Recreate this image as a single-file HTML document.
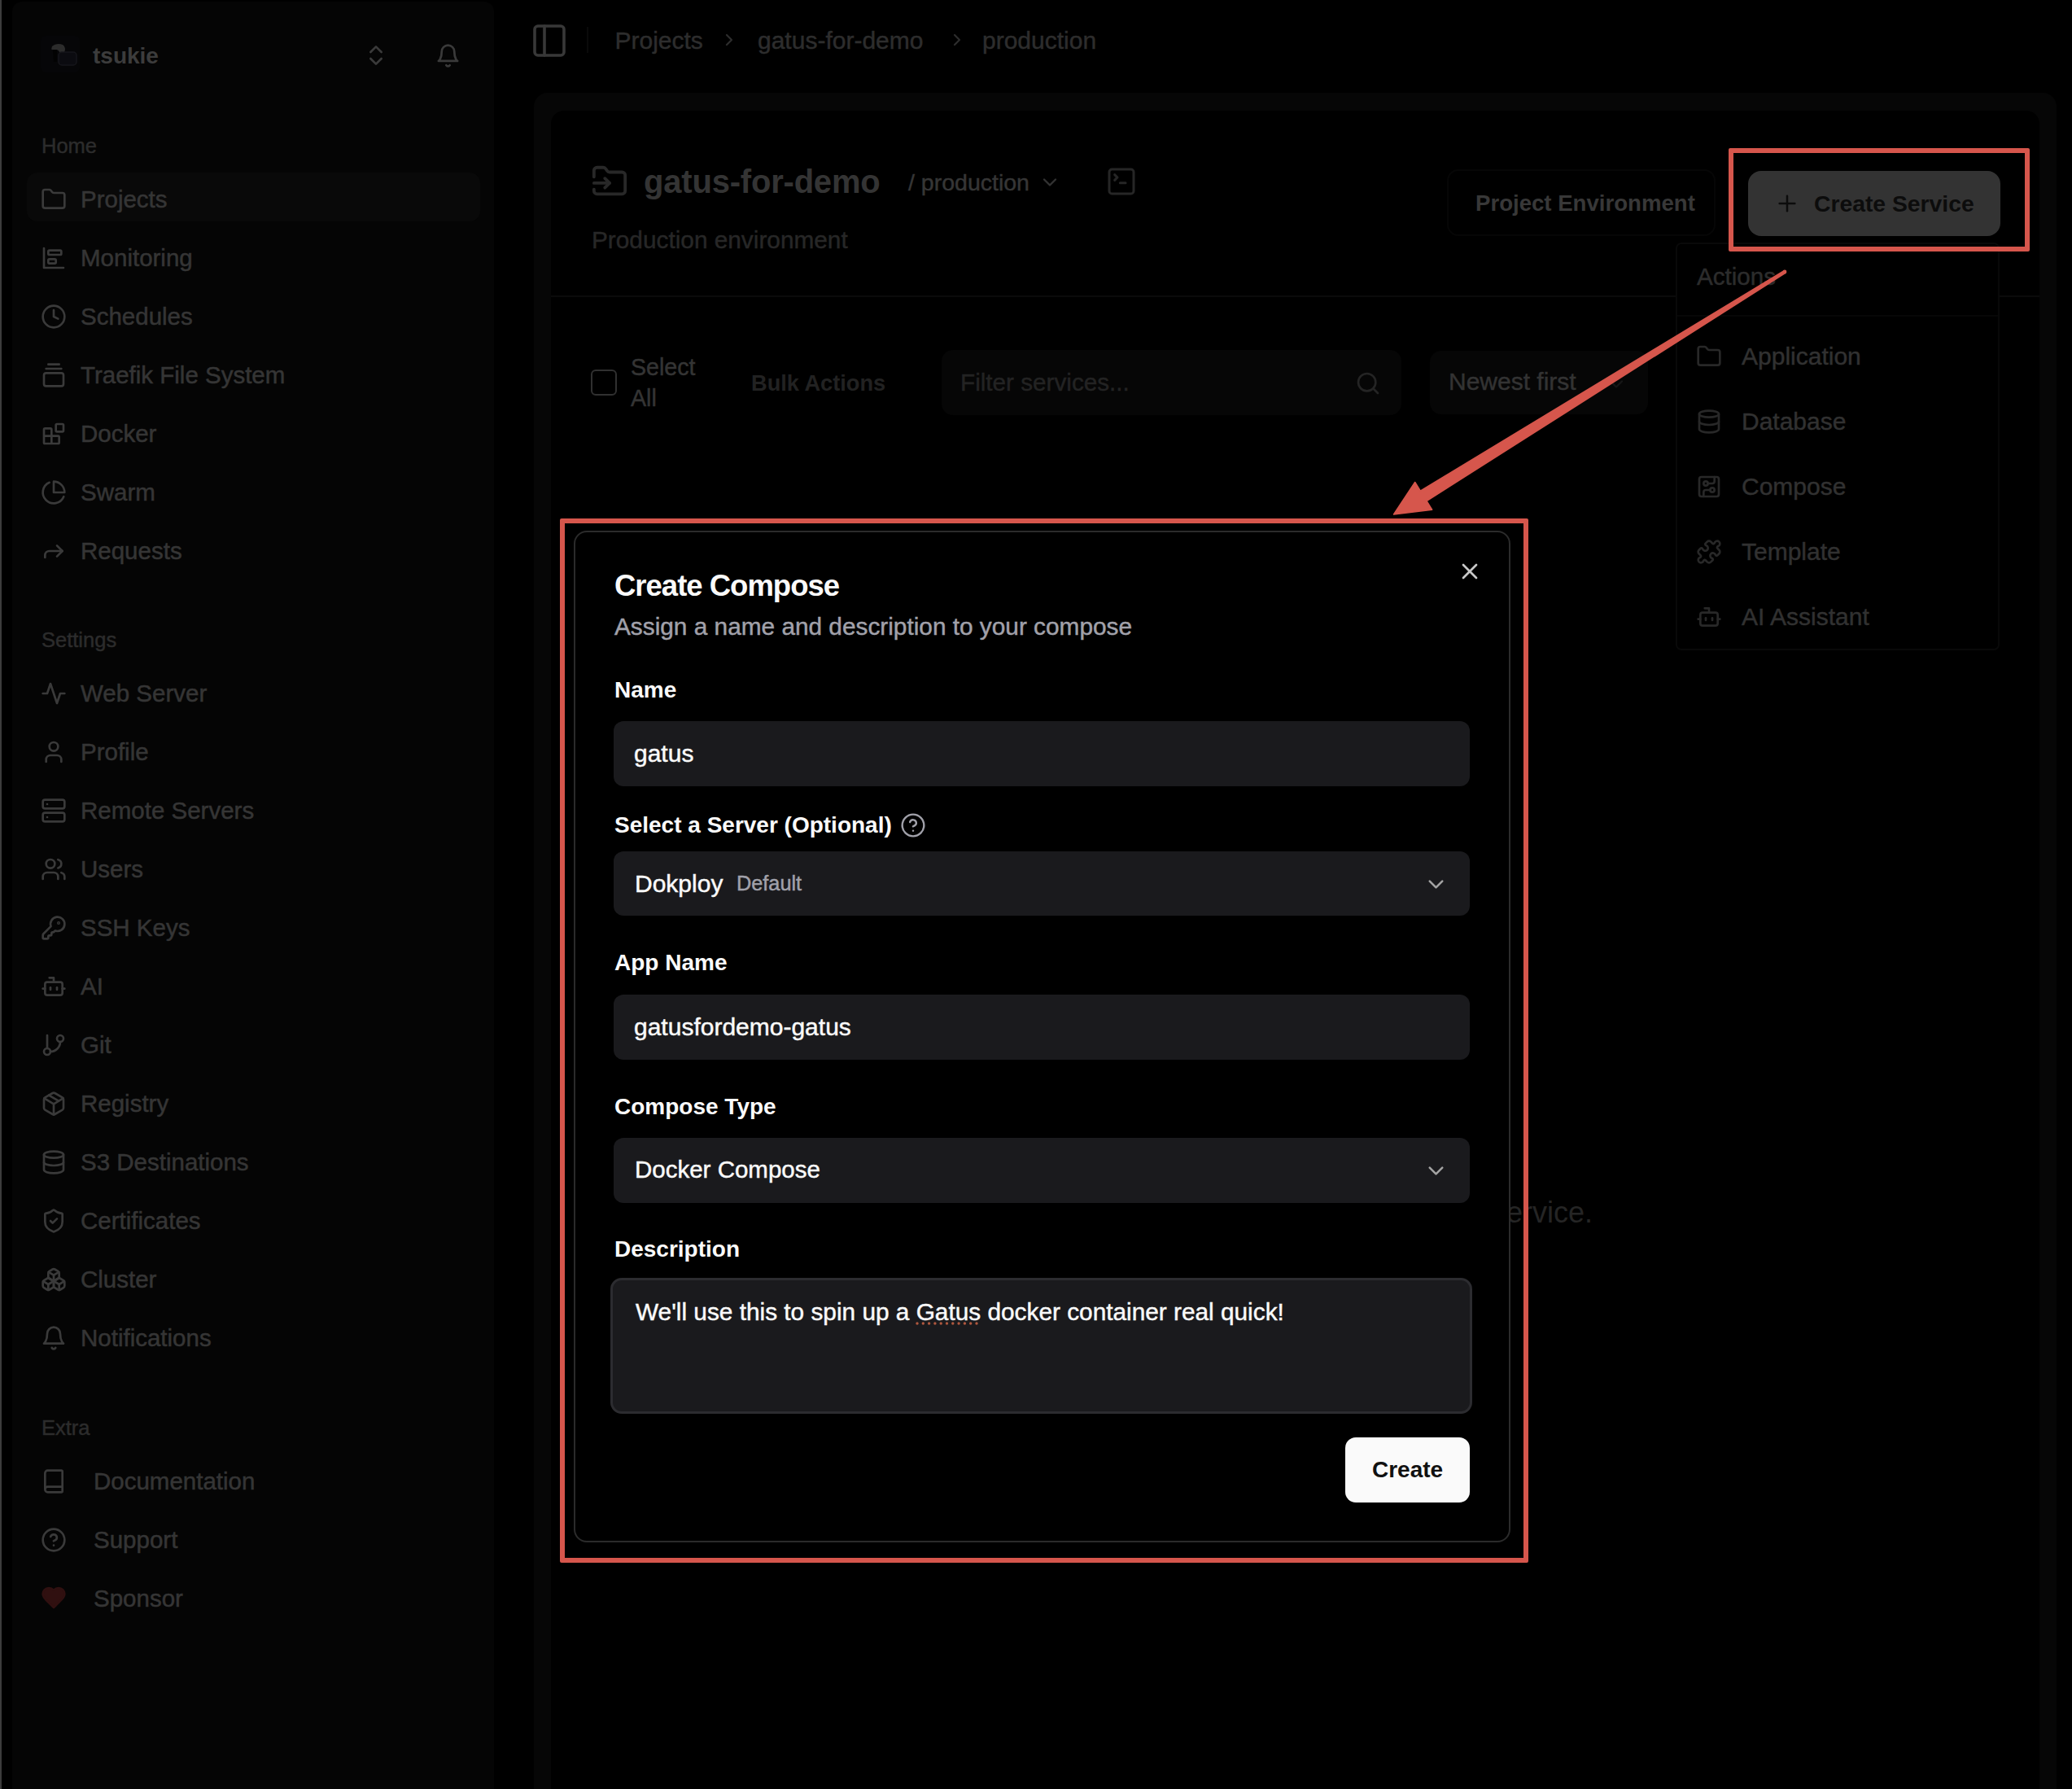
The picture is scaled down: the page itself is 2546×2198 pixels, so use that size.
<!DOCTYPE html>
<html><head><meta charset="utf-8"><style>
html,body{margin:0;padding:0;background:#000;width:2546px;height:2198px;overflow:hidden;position:relative;font-family:"Liberation Sans",sans-serif}
.t{position:absolute;white-space:nowrap;line-height:1;-webkit-font-smoothing:antialiased}
.r{position:absolute}
.i{position:absolute;overflow:visible}
</style></head><body>
<div id="root" style="position:relative;width:2546px;height:2198px;overflow:hidden">
<div class="r" style="left:0;top:0;width:2px;height:2198px;background:#3c3c3c"></div>
<div class="r" style="left:15px;top:2px;width:592px;height:2196px;background:#050505;border-radius:12px 12px 0 0;"></div>
<div class="r" style="left:50px;top:44px;width:48px;height:45px;background:#060608;border-radius:6px;"></div>
<svg class="i" style="left:0;top:0" width="120" height="100"><path d="M64 57c3-3 9-4 13-2 3 2 4 6 2 9-1 2-3 3-5 3l-1-3c-1-2-2-3-4-3h-5c-1 0-1-1 0-4z" fill="#2c2c2c"/><path d="M65 61h5v15h-4z" fill="#020202"/><rect x="72" y="64" width="22" height="16" rx="4" fill="#0b0b10" stroke="#16161b" stroke-width="1.5"/></svg>
<div class="t" style="left:114.0px;top:54.8px;font-size:28px;color:#3c3c3c;font-weight:700;letter-spacing:0px;">tsukie</div>
<svg class="i" style="left:446.0px;top:52.0px;" width="32" height="32" viewBox="0 0 24 24" fill="none" stroke="#3a3a3a" stroke-width="2" stroke-linecap="round" stroke-linejoin="round"><path d="m7 15 5 5 5-5"/><path d="m7 9 5-5 5 5"/></svg>
<svg class="i" style="left:534.5px;top:52.5px;" width="31" height="31" viewBox="0 0 24 24" fill="none" stroke="#3a3a3a" stroke-width="2.1" stroke-linecap="round" stroke-linejoin="round"><path d="M6 8a6 6 0 0 1 12 0c0 7 3 9 3 9H3s3-2 3-9"/><path d="M10.3 21a1.94 1.94 0 0 0 3.4 0"/></svg>
<div class="t" style="left:51.0px;top:166.9px;font-size:25.5px;color:#2c2c2c;font-weight:400;letter-spacing:0px;-webkit-text-stroke:0.45px #2c2c2c;">Home</div>
<div class="r" style="left:33px;top:212px;width:557px;height:60px;background:#090909;border-radius:13px;"></div>
<svg class="i" style="left:50.0px;top:229.0px;" width="32" height="32" viewBox="0 0 24 24" fill="none" stroke="#3a3a3a" stroke-width="2" stroke-linecap="round" stroke-linejoin="round"><path d="M20 20a2 2 0 0 0 2-2V8a2 2 0 0 0-2-2h-7.9a2 2 0 0 1-1.69-.9L9.6 3.9A2 2 0 0 0 7.93 3H4a2 2 0 0 0-2 2v13a2 2 0 0 0 2 2Z"/></svg>
<div class="t" style="left:99.0px;top:229.8px;font-size:29.5px;color:#353535;font-weight:400;letter-spacing:0px;-webkit-text-stroke:0.5px #353535">Projects</div>
<svg class="i" style="left:50.0px;top:301.0px;" width="32" height="32" viewBox="0 0 24 24" fill="none" stroke="#3a3a3a" stroke-width="2" stroke-linecap="round" stroke-linejoin="round"><path d="M3 3v18h18"/><rect width="12" height="4" x="7" y="5" rx="1"/><rect width="7" height="4" x="7" y="13" rx="1"/></svg>
<div class="t" style="left:99.0px;top:301.8px;font-size:29.5px;color:#353535;font-weight:400;letter-spacing:0px;-webkit-text-stroke:0.5px #353535">Monitoring</div>
<svg class="i" style="left:50.0px;top:373.0px;" width="32" height="32" viewBox="0 0 24 24" fill="none" stroke="#3a3a3a" stroke-width="2" stroke-linecap="round" stroke-linejoin="round"><circle cx="12" cy="12" r="10"/><polyline points="12 6 12 12 16 14"/></svg>
<div class="t" style="left:99.0px;top:373.8px;font-size:29.5px;color:#353535;font-weight:400;letter-spacing:0px;-webkit-text-stroke:0.5px #353535">Schedules</div>
<svg class="i" style="left:50.0px;top:445.0px;" width="32" height="32" viewBox="0 0 24 24" fill="none" stroke="#3a3a3a" stroke-width="2" stroke-linecap="round" stroke-linejoin="round"><path d="M7 2h10"/><path d="M5 6h14"/><rect width="18" height="12" x="3" y="10" rx="2"/></svg>
<div class="t" style="left:99.0px;top:445.8px;font-size:29.5px;color:#353535;font-weight:400;letter-spacing:0px;-webkit-text-stroke:0.5px #353535">Traefik File System</div>
<svg class="i" style="left:50.0px;top:517.0px;" width="32" height="32" viewBox="0 0 24 24" fill="none" stroke="#3a3a3a" stroke-width="2" stroke-linecap="round" stroke-linejoin="round"><rect width="7" height="7" x="14" y="3" rx="1"/><path d="M10 21V8a1 1 0 0 0-1-1H4a1 1 0 0 0-1 1v12a1 1 0 0 0 1 1h12a1 1 0 0 0 1-1v-5a1 1 0 0 0-1-1H3"/></svg>
<div class="t" style="left:99.0px;top:517.8px;font-size:29.5px;color:#353535;font-weight:400;letter-spacing:0px;-webkit-text-stroke:0.5px #353535">Docker</div>
<svg class="i" style="left:50.0px;top:589.0px;" width="32" height="32" viewBox="0 0 24 24" fill="none" stroke="#3a3a3a" stroke-width="2" stroke-linecap="round" stroke-linejoin="round"><path d="M21.21 15.89A10 10 0 1 1 8 2.83"/><path d="M22 12A10 10 0 0 0 12 2v10z"/></svg>
<div class="t" style="left:99.0px;top:589.8px;font-size:29.5px;color:#353535;font-weight:400;letter-spacing:0px;-webkit-text-stroke:0.5px #353535">Swarm</div>
<svg class="i" style="left:50.0px;top:661.0px;" width="32" height="32" viewBox="0 0 24 24" fill="none" stroke="#3a3a3a" stroke-width="2" stroke-linecap="round" stroke-linejoin="round"><polyline points="15 17 20 12 15 7"/><path d="M4 18v-2a4 4 0 0 1 4-4h12"/></svg>
<div class="t" style="left:99.0px;top:661.8px;font-size:29.5px;color:#353535;font-weight:400;letter-spacing:0px;-webkit-text-stroke:0.5px #353535">Requests</div>
<div class="t" style="left:51.0px;top:774.4px;font-size:25.5px;color:#2c2c2c;font-weight:400;letter-spacing:0px;-webkit-text-stroke:0.45px #2c2c2c;">Settings</div>
<svg class="i" style="left:50.0px;top:836.0px;" width="32" height="32" viewBox="0 0 24 24" fill="none" stroke="#3a3a3a" stroke-width="2" stroke-linecap="round" stroke-linejoin="round"><path d="M22 12h-4l-3 9L9 3l-3 9H2"/></svg>
<div class="t" style="left:99.0px;top:836.8px;font-size:29.5px;color:#353535;font-weight:400;letter-spacing:0px;-webkit-text-stroke:0.5px #353535">Web Server</div>
<svg class="i" style="left:50.0px;top:908.0px;" width="32" height="32" viewBox="0 0 24 24" fill="none" stroke="#3a3a3a" stroke-width="2" stroke-linecap="round" stroke-linejoin="round"><path d="M19 21v-2a4 4 0 0 0-4-4H9a4 4 0 0 0-4 4v2"/><circle cx="12" cy="7" r="4"/></svg>
<div class="t" style="left:99.0px;top:908.8px;font-size:29.5px;color:#353535;font-weight:400;letter-spacing:0px;-webkit-text-stroke:0.5px #353535">Profile</div>
<svg class="i" style="left:50.0px;top:980.0px;" width="32" height="32" viewBox="0 0 24 24" fill="none" stroke="#3a3a3a" stroke-width="2" stroke-linecap="round" stroke-linejoin="round"><rect width="20" height="8" x="2" y="2" rx="2" ry="2"/><rect width="20" height="8" x="2" y="14" rx="2" ry="2"/><line x1="6" x2="6.01" y1="6" y2="6"/><line x1="6" x2="6.01" y1="18" y2="18"/></svg>
<div class="t" style="left:99.0px;top:980.8px;font-size:29.5px;color:#353535;font-weight:400;letter-spacing:0px;-webkit-text-stroke:0.5px #353535">Remote Servers</div>
<svg class="i" style="left:50.0px;top:1052.0px;" width="32" height="32" viewBox="0 0 24 24" fill="none" stroke="#3a3a3a" stroke-width="2" stroke-linecap="round" stroke-linejoin="round"><path d="M16 21v-2a4 4 0 0 0-4-4H6a4 4 0 0 0-4 4v2"/><circle cx="9" cy="7" r="4"/><path d="M22 21v-2a4 4 0 0 0-3-3.87"/><path d="M16 3.13a4 4 0 0 1 0 7.75"/></svg>
<div class="t" style="left:99.0px;top:1052.8px;font-size:29.5px;color:#353535;font-weight:400;letter-spacing:0px;-webkit-text-stroke:0.5px #353535">Users</div>
<svg class="i" style="left:50.0px;top:1124.0px;" width="32" height="32" viewBox="0 0 24 24" fill="none" stroke="#3a3a3a" stroke-width="2" stroke-linecap="round" stroke-linejoin="round"><path d="M2.586 17.414A2 2 0 0 0 2 18.828V21a1 1 0 0 0 1 1h3a1 1 0 0 0 1-1v-1a1 1 0 0 1 1-1h1a1 1 0 0 0 1-1v-1a1 1 0 0 1 1-1h.172a2 2 0 0 0 1.414-.586l.814-.814a6.5 6.5 0 1 0-4-4z"/><circle cx="16.5" cy="7.5" r=".5" fill="currentColor"/></svg>
<div class="t" style="left:99.0px;top:1124.8px;font-size:29.5px;color:#353535;font-weight:400;letter-spacing:0px;-webkit-text-stroke:0.5px #353535">SSH Keys</div>
<svg class="i" style="left:50.0px;top:1196.0px;" width="32" height="32" viewBox="0 0 24 24" fill="none" stroke="#3a3a3a" stroke-width="2" stroke-linecap="round" stroke-linejoin="round"><path d="M12 8V4H8"/><rect width="16" height="12" x="4" y="8" rx="2"/><path d="M2 14h2"/><path d="M20 14h2"/><path d="M15 13v2"/><path d="M9 13v2"/></svg>
<div class="t" style="left:99.0px;top:1196.8px;font-size:29.5px;color:#353535;font-weight:400;letter-spacing:0px;-webkit-text-stroke:0.5px #353535">AI</div>
<svg class="i" style="left:50.0px;top:1268.0px;" width="32" height="32" viewBox="0 0 24 24" fill="none" stroke="#3a3a3a" stroke-width="2" stroke-linecap="round" stroke-linejoin="round"><line x1="6" x2="6" y1="3" y2="15"/><circle cx="18" cy="6" r="3"/><circle cx="6" cy="18" r="3"/><path d="M18 9a9 9 0 0 1-9 9"/></svg>
<div class="t" style="left:99.0px;top:1268.8px;font-size:29.5px;color:#353535;font-weight:400;letter-spacing:0px;-webkit-text-stroke:0.5px #353535">Git</div>
<svg class="i" style="left:50.0px;top:1340.0px;" width="32" height="32" viewBox="0 0 24 24" fill="none" stroke="#3a3a3a" stroke-width="2" stroke-linecap="round" stroke-linejoin="round"><path d="M11 21.73a2 2 0 0 0 2 0l7-4A2 2 0 0 0 21 16V8a2 2 0 0 0-1-1.73l-7-4a2 2 0 0 0-2 0l-7 4A2 2 0 0 0 3 8v8a2 2 0 0 0 1 1.73z"/><path d="M12 22V12"/><path d="m3.3 7 7.703 4.734a2 2 0 0 0 1.994 0L20.7 7"/><path d="m7.5 4.27 9 5.15"/></svg>
<div class="t" style="left:99.0px;top:1340.8px;font-size:29.5px;color:#353535;font-weight:400;letter-spacing:0px;-webkit-text-stroke:0.5px #353535">Registry</div>
<svg class="i" style="left:50.0px;top:1412.0px;" width="32" height="32" viewBox="0 0 24 24" fill="none" stroke="#3a3a3a" stroke-width="2" stroke-linecap="round" stroke-linejoin="round"><ellipse cx="12" cy="5" rx="9" ry="3"/><path d="M3 5V19A9 3 0 0 0 21 19V5"/><path d="M3 12A9 3 0 0 0 21 12"/></svg>
<div class="t" style="left:99.0px;top:1412.8px;font-size:29.5px;color:#353535;font-weight:400;letter-spacing:0px;-webkit-text-stroke:0.5px #353535">S3 Destinations</div>
<svg class="i" style="left:50.0px;top:1484.0px;" width="32" height="32" viewBox="0 0 24 24" fill="none" stroke="#3a3a3a" stroke-width="2" stroke-linecap="round" stroke-linejoin="round"><path d="M20 13c0 5-3.5 7.5-7.66 8.95a1 1 0 0 1-.67-.01C7.5 20.5 4 18 4 13V6a1 1 0 0 1 1-1c2 0 4.5-1.2 6.24-2.72a1.17 1.17 0 0 1 1.52 0C14.51 3.81 17 5 19 5a1 1 0 0 1 1 1z"/><path d="m9 12 2 2 4-4"/></svg>
<div class="t" style="left:99.0px;top:1484.8px;font-size:29.5px;color:#353535;font-weight:400;letter-spacing:0px;-webkit-text-stroke:0.5px #353535">Certificates</div>
<svg class="i" style="left:50.0px;top:1556.0px;" width="32" height="32" viewBox="0 0 24 24" fill="none" stroke="#3a3a3a" stroke-width="2" stroke-linecap="round" stroke-linejoin="round"><path d="M2.97 12.92A2 2 0 0 0 2 14.63v3.24a2 2 0 0 0 .97 1.71l3 1.8a2 2 0 0 0 2.06 0L12 19v-5.5l-5-3-4.03 2.42Z"/><path d="m7 16.5-4.74-2.85"/><path d="m7 16.5 5-3"/><path d="M7 16.5v5.17"/><path d="M12 13.5V19l3.97 2.38a2 2 0 0 0 2.06 0l3-1.8a2 2 0 0 0 .97-1.71v-3.24a2 2 0 0 0-.97-1.71L17 10.5l-5 3Z"/><path d="m17 16.5-5-3"/><path d="m17 16.5 4.74-2.85"/><path d="M17 16.5v5.17"/><path d="M7.97 4.42A2 2 0 0 0 7 6.13v4.37l5 3 5-3V6.13a2 2 0 0 0-.97-1.71l-3-1.8a2 2 0 0 0-2.060 0l-3 1.8Z"/><path d="M12 8 7.26 5.15"/><path d="m12 8 4.74-2.85"/><path d="M12 13.5V8"/></svg>
<div class="t" style="left:99.0px;top:1556.8px;font-size:29.5px;color:#353535;font-weight:400;letter-spacing:0px;-webkit-text-stroke:0.5px #353535">Cluster</div>
<svg class="i" style="left:50.0px;top:1628.0px;" width="32" height="32" viewBox="0 0 24 24" fill="none" stroke="#3a3a3a" stroke-width="2" stroke-linecap="round" stroke-linejoin="round"><path d="M6 8a6 6 0 0 1 12 0c0 7 3 9 3 9H3s3-2 3-9"/><path d="M10.3 21a1.94 1.94 0 0 0 3.4 0"/></svg>
<div class="t" style="left:99.0px;top:1628.8px;font-size:29.5px;color:#353535;font-weight:400;letter-spacing:0px;-webkit-text-stroke:0.5px #353535">Notifications</div>
<div class="t" style="left:51.0px;top:1742.4px;font-size:25.5px;color:#2c2c2c;font-weight:400;letter-spacing:0px;-webkit-text-stroke:0.45px #2c2c2c;">Extra</div>
<svg class="i" style="left:50.0px;top:1804.0px;" width="32" height="32" viewBox="0 0 24 24" fill="none" stroke="#3a3a3a" stroke-width="2" stroke-linecap="round" stroke-linejoin="round"><path d="M4 19.5v-15A2.5 2.5 0 0 1 6.5 2H19a1 1 0 0 1 1 1v18a1 1 0 0 1-1 1H6.5a1 1 0 0 1 0-5H20"/></svg>
<div class="t" style="left:115.0px;top:1804.8px;font-size:29.5px;color:#353535;font-weight:400;letter-spacing:0px;-webkit-text-stroke:0.5px #353535">Documentation</div>
<svg class="i" style="left:50.0px;top:1876.0px;" width="32" height="32" viewBox="0 0 24 24" fill="none" stroke="#3a3a3a" stroke-width="2" stroke-linecap="round" stroke-linejoin="round"><circle cx="12" cy="12" r="10"/><path d="M9.09 9a3 3 0 0 1 5.83 1c0 2-3 3-3 3"/><path d="M12 17h.01"/></svg>
<div class="t" style="left:115.0px;top:1876.8px;font-size:29.5px;color:#353535;font-weight:400;letter-spacing:0px;-webkit-text-stroke:0.5px #353535">Support</div>
<svg class="i" style="left:50.0px;top:1947.0px;" width="32" height="32" viewBox="0 0 24 24" fill="#301010" stroke="#301010" stroke-width="2" stroke-linecap="round" stroke-linejoin="round"><path d="M19 14c1.49-1.46 3-3.21 3-5.5A5.5 5.5 0 0 0 16.5 3c-1.76 0-3 .5-4.5 2-1.5-1.5-2.74-2-4.5-2A5.5 5.5 0 0 0 2 8.5c0 2.3 1.5 4.05 3 5.5l7 7Z"/></svg>
<div class="t" style="left:115.0px;top:1948.8px;font-size:29.5px;color:#353535;font-weight:400;letter-spacing:0px;-webkit-text-stroke:0.5px #353535">Sponsor</div>
<svg class="i" style="left:651.0px;top:26.0px;" width="48" height="48" viewBox="0 0 24 24" fill="none" stroke="#383838" stroke-width="1.8" stroke-linecap="round" stroke-linejoin="round"><rect width="18" height="18" x="3" y="3" rx="2"/><path d="M9 3v18"/></svg>
<div class="r" style="left:721px;top:33px;width:2px;height:32px;background:#0a0a0a;border-radius:0px;"></div>
<div class="t" style="left:755.5px;top:34.6px;font-size:30px;color:#2d2d2d;font-weight:400;letter-spacing:0px;-webkit-text-stroke:0.45px #2d2d2d;">Projects</div>
<svg class="i" style="left:884.0px;top:37.0px;" width="24" height="24" viewBox="0 0 24 24" fill="none" stroke="#2d2d2d" stroke-width="2.2" stroke-linecap="round" stroke-linejoin="round"><path d="m9 18 6-6-6-6"/></svg>
<div class="t" style="left:931.0px;top:34.6px;font-size:30px;color:#2d2d2d;font-weight:400;letter-spacing:0px;-webkit-text-stroke:0.45px #2d2d2d;">gatus-for-demo</div>
<svg class="i" style="left:1164.0px;top:37.0px;" width="24" height="24" viewBox="0 0 24 24" fill="none" stroke="#2d2d2d" stroke-width="2.2" stroke-linecap="round" stroke-linejoin="round"><path d="m9 18 6-6-6-6"/></svg>
<div class="t" style="left:1207.0px;top:34.6px;font-size:30px;color:#2d2d2d;font-weight:400;letter-spacing:0px;-webkit-text-stroke:0.45px #2d2d2d;">production</div>
<div class="r" style="left:656px;top:114px;width:1871px;height:2084px;background:#060606;border-radius:17px 17px 0 0;"></div>
<div class="r" style="left:677px;top:136px;width:1829px;height:2062px;background:#000000;border-radius:16px 16px 0 0;"></div>
<svg class="i" style="left:726.0px;top:200.0px;" width="46" height="46" viewBox="0 0 24 24" fill="none" stroke="#282828" stroke-width="2" stroke-linecap="round" stroke-linejoin="round"><path d="M2 9V5a2 2 0 0 1 2-2h3.9a2 2 0 0 1 1.69.9l.81 1.2a2 2 0 0 0 1.67.9H20a2 2 0 0 1 2 2v10a2 2 0 0 1-2 2H4a2 2 0 0 1-2-2v-1"/><path d="M2 13h10"/><path d="m9 16 3-3-3-3"/></svg>
<div class="t" style="left:791.0px;top:203.3px;font-size:40px;color:#343434;font-weight:700;letter-spacing:-0.2px;">gatus-for-demo</div>
<div class="t" style="left:1116.0px;top:210.4px;font-size:28.5px;color:#363636;font-weight:400;letter-spacing:0px;-webkit-text-stroke:0.45px #363636;">/ production</div>
<svg class="i" style="left:1276.0px;top:209.5px;" width="28" height="28" viewBox="0 0 24 24" fill="none" stroke="#333333" stroke-width="2" stroke-linecap="round" stroke-linejoin="round"><path d="m6 9 6 6 6-6"/></svg>
<svg class="i" style="left:1358.0px;top:203.0px;" width="40" height="40" viewBox="0 0 24 24" fill="none" stroke="#262626" stroke-width="1.8" stroke-linecap="round" stroke-linejoin="round"><path d="m7 11 2-2-2-2"/><path d="M11 13h4"/><rect width="18" height="18" x="3" y="3" rx="2" ry="2"/></svg>
<div class="t" style="left:727.0px;top:280.1px;font-size:29.8px;color:#272727;font-weight:400;letter-spacing:0px;-webkit-text-stroke:0.45px #272727;">Production environment</div>
<div class="r" style="left:1778px;top:208px;width:330px;height:82px;background:transparent;border-radius:14px;border:2px solid #060606;box-sizing:border-box"></div>
<div class="t" style="left:1813.0px;top:236.3px;font-size:27.6px;color:#383838;font-weight:700;letter-spacing:0px;">Project Environment</div>
<div class="r" style="left:2148px;top:210px;width:310px;height:80px;background:#333333;border-radius:16px;"></div>
<svg class="i" style="left:2180.0px;top:234.0px;" width="32" height="32" viewBox="0 0 24 24" fill="none" stroke="#0c0c0c" stroke-width="1.9" stroke-linecap="round" stroke-linejoin="round"><path d="M5 12h14"/><path d="M12 5v14"/></svg>
<div class="t" style="left:2229.0px;top:235.7px;font-size:28.3px;color:#0c0c0c;font-weight:700;letter-spacing:0px;">Create Service</div>
<div class="r" style="left:677px;top:363px;width:1829px;height:2px;background:#0a0a0a;border-radius:0px;"></div>
<div class="r" style="left:726px;top:454px;width:32px;height:32px;background:transparent;border-radius:6px;border:2px solid #303030;box-sizing:border-box"></div>
<div class="t" style="left:775.0px;top:436.5px;font-size:28.6px;color:#343434;font-weight:400;letter-spacing:0px;-webkit-text-stroke:0.45px #343434;">Select</div>
<div class="t" style="left:775.0px;top:475.3px;font-size:28.6px;color:#343434;font-weight:400;letter-spacing:0px;-webkit-text-stroke:0.45px #343434;">All</div>
<div class="t" style="left:923.0px;top:456.8px;font-size:27.2px;color:#222222;font-weight:700;letter-spacing:0px;">Bulk Actions</div>
<div class="r" style="left:1157px;top:430px;width:565px;height:80px;background:#060606;border-radius:14px;"></div>
<div class="t" style="left:1180.0px;top:454.9px;font-size:29.7px;color:#232323;font-weight:400;letter-spacing:0px;-webkit-text-stroke:0.45px #232323;">Filter services...</div>
<svg class="i" style="left:1665.0px;top:455.0px;" width="32" height="32" viewBox="0 0 24 24" fill="none" stroke="#242424" stroke-width="2" stroke-linecap="round" stroke-linejoin="round"><circle cx="11" cy="11" r="8"/><path d="m21 21-4.3-4.3"/></svg>
<div class="r" style="left:1757px;top:431px;width:268px;height:78px;background:#060606;border-radius:14px;"></div>
<div class="t" style="left:1780.0px;top:453.6px;font-size:30px;color:#333333;font-weight:400;letter-spacing:0px;-webkit-text-stroke:0.45px #333333;">Newest first</div>
<svg class="i" style="left:1972.0px;top:458.0px;" width="28" height="28" viewBox="0 0 24 24" fill="none" stroke="#161616" stroke-width="2" stroke-linecap="round" stroke-linejoin="round"><path d="m6 9 6 6 6-6"/></svg>
<div class="t" style="right:589px;top:1472.0px;font-size:36px;color:#252525">No services added yet. Click on Create Service.</div>
<div class="r" style="left:2059px;top:298px;width:398px;height:501px;background:#000000;border-radius:7px;border:2px solid #090909;box-sizing:border-box"></div>
<div class="t" style="left:2085.0px;top:324.9px;font-size:29.6px;color:#2c2c2c;font-weight:400;letter-spacing:0px;-webkit-text-stroke:0.45px #2c2c2c;">Actions</div>
<div class="r" style="left:2061px;top:387px;width:394px;height:2px;background:#070707;border-radius:0px;"></div>
<svg class="i" style="left:2084.0px;top:422.4px;" width="32" height="32" viewBox="0 0 24 24" fill="none" stroke="#282828" stroke-width="2" stroke-linecap="round" stroke-linejoin="round"><path d="M20 20a2 2 0 0 0 2-2V8a2 2 0 0 0-2-2h-7.9a2 2 0 0 1-1.69-.9L9.6 3.9A2 2 0 0 0 7.93 3H4a2 2 0 0 0-2 2v13a2 2 0 0 0 2 2Z"/></svg>
<div class="t" style="left:2140.0px;top:422.5px;font-size:30px;color:#313131;font-weight:400;letter-spacing:0px;-webkit-text-stroke:0.45px #313131;">Application</div>
<svg class="i" style="left:2084.0px;top:502.4px;" width="32" height="32" viewBox="0 0 24 24" fill="none" stroke="#282828" stroke-width="2" stroke-linecap="round" stroke-linejoin="round"><ellipse cx="12" cy="5" rx="9" ry="3"/><path d="M3 5V19A9 3 0 0 0 21 19V5"/><path d="M3 12A9 3 0 0 0 21 12"/></svg>
<div class="t" style="left:2140.0px;top:502.5px;font-size:30px;color:#313131;font-weight:400;letter-spacing:0px;-webkit-text-stroke:0.45px #313131;">Database</div>
<svg class="i" style="left:2084.0px;top:582.4px;" width="32" height="32" viewBox="0 0 24 24" fill="none" stroke="#282828" stroke-width="2" stroke-linecap="round" stroke-linejoin="round"><rect width="18" height="18" x="3" y="3" rx="2"/><path d="M11 9h4a2 2 0 0 0 2-2V3"/><circle cx="9" cy="9" r="2"/><path d="M7 21v-4a2 2 0 0 1 2-2h4"/><circle cx="15" cy="15" r="2"/></svg>
<div class="t" style="left:2140.0px;top:582.5px;font-size:30px;color:#313131;font-weight:400;letter-spacing:0px;-webkit-text-stroke:0.45px #313131;">Compose</div>
<svg class="i" style="left:2084.0px;top:662.4px;" width="32" height="32" viewBox="0 0 24 24" fill="none" stroke="#282828" stroke-width="2" stroke-linecap="round" stroke-linejoin="round"><path d="M19.439 7.85c-.049.322.059.648.289.878l1.568 1.568c.47.47.706 1.087.706 1.704s-.235 1.233-.706 1.704l-1.611 1.611a.98.98 0 0 1-.837.276c-.47-.07-.802-.48-.968-.925a2.501 2.501 0 1 0-3.214 3.214c.446.166.855.497.925.968a.979.979 0 0 1-.276.837l-1.61 1.61a2.404 2.404 0 0 1-1.705.707 2.402 2.402 0 0 1-1.704-.706l-1.568-1.568a1.026 1.026 0 0 0-.877-.29c-.493.074-.84.504-1.02.968a2.5 2.5 0 1 1-3.237-3.237c.464-.18.894-.527.967-1.02a1.026 1.026 0 0 0-.289-.877l-1.568-1.568A2.402 2.402 0 0 1 1.998 12c0-.617.236-1.234.706-1.704L4.23 8.77c.24-.24.581-.353.917-.303.515.077.877.528 1.073 1.01a2.5 2.5 0 1 0 3.259-3.259c-.482-.196-.933-.558-1.010-1.073-.05-.336.062-.676.303-.917l1.525-1.525A2.402 2.402 0 0 1 12 1.998c.617 0 1.234.236 1.704.706l1.568 1.568c.23.23.556.338.877.29.493-.074.84-.504 1.02-.968a2.5 2.5 0 1 1 3.237 3.237c-.464.18-.894.527-.967 1.02Z"/></svg>
<div class="t" style="left:2140.0px;top:662.5px;font-size:30px;color:#313131;font-weight:400;letter-spacing:0px;-webkit-text-stroke:0.45px #313131;">Template</div>
<svg class="i" style="left:2084.0px;top:742.4px;" width="32" height="32" viewBox="0 0 24 24" fill="none" stroke="#282828" stroke-width="2" stroke-linecap="round" stroke-linejoin="round"><path d="M12 8V4H8"/><rect width="16" height="12" x="4" y="8" rx="2"/><path d="M2 14h2"/><path d="M20 14h2"/><path d="M15 13v2"/><path d="M9 13v2"/></svg>
<div class="t" style="left:2140.0px;top:742.5px;font-size:30px;color:#313131;font-weight:400;letter-spacing:0px;-webkit-text-stroke:0.45px #313131;">AI Assistant</div>
<div class="r" style="left:705px;top:652px;width:1151px;height:1243px;background:#000000;border-radius:16px;border:2px solid #2b2b2b;box-sizing:border-box"></div>
<svg class="i" style="left:1790.0px;top:686.0px;" width="32" height="32" viewBox="0 0 24 24" fill="none" stroke="#c8c8c8" stroke-width="2" stroke-linecap="round" stroke-linejoin="round"><path d="M18 6 6 18"/><path d="m6 6 12 12"/></svg>
<div class="t" style="left:755.0px;top:702.3px;font-size:36.5px;color:#fafafa;font-weight:700;letter-spacing:-1.0px;">Create Compose</div>
<div class="t" style="left:755.0px;top:754.8px;font-size:29.8px;color:#a1a1aa;font-weight:400;letter-spacing:0px;-webkit-text-stroke:0.45px #a1a1aa;">Assign a name and description to your compose</div>
<div class="t" style="left:755.0px;top:834.3px;font-size:28px;color:#fafafa;font-weight:700;letter-spacing:0px;">Name</div>
<div class="r" style="left:754px;top:886px;width:1052px;height:80px;background:#1a1a1d;border-radius:12px;"></div>
<div class="t" style="left:779.0px;top:910.6px;font-size:30px;color:#fafafa;font-weight:400;letter-spacing:0px;-webkit-text-stroke:0.45px #fafafa;">gatus</div>
<div class="t" style="left:755.0px;top:1000.3px;font-size:28px;color:#fafafa;font-weight:700;letter-spacing:0px;">Select a Server (Optional)</div>
<svg class="i" style="left:1106.0px;top:998.0px;" width="32" height="32" viewBox="0 0 24 24" fill="none" stroke="#a1a1aa" stroke-width="1.8" stroke-linecap="round" stroke-linejoin="round"><circle cx="12" cy="12" r="10"/><path d="M9.09 9a3 3 0 0 1 5.83 1c0 2-3 3-3 3"/><path d="M12 17h.01"/></svg>
<div class="r" style="left:754px;top:1046px;width:1052px;height:79px;background:#1a1a1d;border-radius:12px;"></div>
<div class="t" style="left:780.0px;top:1070.6px;font-size:30px;color:#fafafa;font-weight:400;letter-spacing:0px;-webkit-text-stroke:0.45px #fafafa;">Dokploy</div>
<div class="t" style="left:905.0px;top:1072.6px;font-size:25.3px;color:#a1a1aa;font-weight:400;letter-spacing:0px;-webkit-text-stroke:0.45px #a1a1aa;">Default</div>
<svg class="i" style="left:1748.5px;top:1070.5px;" width="31" height="31" viewBox="0 0 24 24" fill="none" stroke="#a3a3a3" stroke-width="2" stroke-linecap="round" stroke-linejoin="round"><path d="m6 9 6 6 6-6"/></svg>
<div class="t" style="left:755.0px;top:1169.3px;font-size:28px;color:#fafafa;font-weight:700;letter-spacing:0px;">App Name</div>
<div class="r" style="left:754px;top:1222px;width:1052px;height:80px;background:#1a1a1d;border-radius:12px;"></div>
<div class="t" style="left:779.0px;top:1246.6px;font-size:30px;color:#fafafa;font-weight:400;letter-spacing:0px;-webkit-text-stroke:0.45px #fafafa;">gatusfordemo-gatus</div>
<div class="t" style="left:755.0px;top:1346.3px;font-size:28px;color:#fafafa;font-weight:700;letter-spacing:0px;">Compose Type</div>
<div class="r" style="left:754px;top:1398px;width:1052px;height:80px;background:#1a1a1d;border-radius:12px;"></div>
<div class="t" style="left:780.0px;top:1422.0px;font-size:29.5px;color:#fafafa;font-weight:400;letter-spacing:0px;-webkit-text-stroke:0.45px #fafafa;">Docker Compose</div>
<svg class="i" style="left:1748.5px;top:1422.5px;" width="31" height="31" viewBox="0 0 24 24" fill="none" stroke="#a3a3a3" stroke-width="2" stroke-linecap="round" stroke-linejoin="round"><path d="m6 9 6 6 6-6"/></svg>
<div class="t" style="left:755.0px;top:1521.3px;font-size:28px;color:#fafafa;font-weight:700;letter-spacing:0px;">Description</div>
<div class="r" style="left:750px;top:1570px;width:1059px;height:167px;background:#1a1a1d;border-radius:14px;border:3px solid #2c2c30;box-sizing:border-box"></div>
<div class="t" style="left:781.0px;top:1596.8px;font-size:29.8px;color:#fafafa;font-weight:400;letter-spacing:0px;-webkit-text-stroke:0.45px #fafafa;">We&#39;ll use this to spin up a Gatus docker container real quick!</div>
<svg class="i" style="left:0;top:0" width="2546" height="2198" fill="#b0583f"><circle cx="1127.0" cy="1626" r="1.7"/><circle cx="1134.3" cy="1626" r="1.7"/><circle cx="1141.6" cy="1626" r="1.7"/><circle cx="1148.9" cy="1626" r="1.7"/><circle cx="1156.2" cy="1626" r="1.7"/><circle cx="1163.5" cy="1626" r="1.7"/><circle cx="1170.8" cy="1626" r="1.7"/><circle cx="1178.1" cy="1626" r="1.7"/><circle cx="1185.4" cy="1626" r="1.7"/><circle cx="1192.7" cy="1626" r="1.7"/><circle cx="1200.0" cy="1626" r="1.7"/></svg>
<div class="r" style="left:1653px;top:1766px;width:153px;height:80px;background:#fafafa;border-radius:13px;"></div>
<div class="t" style="left:1686.0px;top:1792.3px;font-size:28px;color:#111111;font-weight:700;letter-spacing:0px;">Create</div>
<div class="r" style="left:2124px;top:182px;width:370px;height:127px;border:6px solid #d6564c;box-sizing:border-box;border-radius:2px"></div>
<div class="r" style="left:688px;top:637px;width:1190px;height:1283px;border:6px solid #d6564c;box-sizing:border-box;border-radius:2px"></div>
<svg class="i" style="left:0;top:0" width="2546" height="2198"><polygon points="1712.6,632.0 1759.6,626.2 1752.9,615.5 2193.8,335.4 2192.2,332.6 1745.3,603.2 1738.7,592.5" fill="#d6564c" stroke="#d6564c" stroke-width="1.6" stroke-linejoin="round"/><circle cx="2193" cy="334.0" r="2.4" fill="#d6564c"/></svg>
</div></body></html>
